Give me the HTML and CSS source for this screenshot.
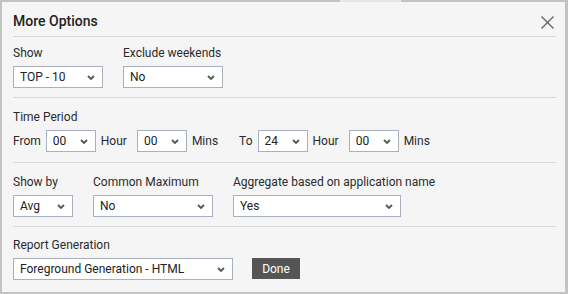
FILE: index.html
```html
<!DOCTYPE html>
<html>
<head>
<meta charset="utf-8">
<link rel="stylesheet" href="styles.css">
</head>
<body>
<div class="backdrop-tab"></div>
<div class="dialog">
  <div class="header">
    <h1 class="title">More Options</h1>
    <button class="close" aria-label="Close">
      <svg width="13" height="13" viewBox="0 0 13 13"><path d="M0.5 0.5 L12.5 12.5 M12.5 0.5 L0.5 12.5" stroke="#666" stroke-width="1.4" fill="none"/></svg>
    </button>
  </div>

  <div class="section s1">
    <div class="fields">
      <div class="field">
        <div class="label">Show</div>
        <div class="select w90"><span>TOP - 10</span><svg class="chev" width="8" height="5" viewBox="0 0 8 5"><path d="M1 1 L4 4 L7 1" stroke="#555" stroke-width="1.8" fill="none"/></svg></div>
      </div>
      <div class="field">
        <div class="label">Exclude weekends</div>
        <div class="select w100"><span>No</span><svg class="chev" width="8" height="5" viewBox="0 0 8 5"><path d="M1 1 L4 4 L7 1" stroke="#555" stroke-width="1.8" fill="none"/></svg></div>
      </div>
    </div>
  </div>

  <div class="section s2">
    <div class="label">Time Period</div>
    <div class="time-row">
      <div class="group">
        <span class="txt">From</span>
        <div class="select w50"><span>00</span><svg class="chev" width="8" height="5" viewBox="0 0 8 5"><path d="M1 1 L4 4 L7 1" stroke="#555" stroke-width="1.8" fill="none"/></svg></div>
        <span class="txt">Hour</span>
      </div>
      <div class="group">
        <div class="select w50"><span>00</span><svg class="chev" width="8" height="5" viewBox="0 0 8 5"><path d="M1 1 L4 4 L7 1" stroke="#555" stroke-width="1.8" fill="none"/></svg></div>
        <span class="txt">Mins</span>
      </div>
      <div class="group to">
        <span class="txt">To</span>
        <div class="select w50"><span>24</span><svg class="chev" width="8" height="5" viewBox="0 0 8 5"><path d="M1 1 L4 4 L7 1" stroke="#555" stroke-width="1.8" fill="none"/></svg></div>
        <span class="txt">Hour</span>
      </div>
      <div class="group">
        <div class="select w50"><span>00</span><svg class="chev" width="8" height="5" viewBox="0 0 8 5"><path d="M1 1 L4 4 L7 1" stroke="#555" stroke-width="1.8" fill="none"/></svg></div>
        <span class="txt">Mins</span>
      </div>
    </div>
  </div>

  <div class="section s3">
    <div class="fields">
      <div class="field">
        <div class="label">Show by</div>
        <div class="select w60"><span>Avg</span><svg class="chev" width="8" height="5" viewBox="0 0 8 5"><path d="M1 1 L4 4 L7 1" stroke="#555" stroke-width="1.8" fill="none"/></svg></div>
      </div>
      <div class="field">
        <div class="label">Common Maximum</div>
        <div class="select w120"><span>No</span><svg class="chev" width="8" height="5" viewBox="0 0 8 5"><path d="M1 1 L4 4 L7 1" stroke="#555" stroke-width="1.8" fill="none"/></svg></div>
      </div>
      <div class="field">
        <div class="label">Aggregate based on application name</div>
        <div class="select w168"><span>Yes</span><svg class="chev" width="8" height="5" viewBox="0 0 8 5"><path d="M1 1 L4 4 L7 1" stroke="#555" stroke-width="1.8" fill="none"/></svg></div>
      </div>
    </div>
  </div>

  <div class="section s4">
    <div class="label">Report Generation</div>
    <div class="report-row">
      <div class="select w220"><span>Foreground Generation - HTML</span><svg class="chev" width="8" height="5" viewBox="0 0 8 5"><path d="M1 1 L4 4 L7 1" stroke="#555" stroke-width="1.8" fill="none"/></svg></div>
      <button class="done">Done</button>
    </div>
  </div>
</div>
</body>
</html>
```

FILE: styles.css
```css
* { box-sizing: border-box; }

html, body {
  margin: 0;
  padding: 0;
}

body {
  background: #c3c3c3;
  width: 568px;
  height: 294px;
  overflow: hidden;
  position: relative;
  font-family: Roboto, "Liberation Sans", sans-serif;
  font-size: 12px;
  color: #2b2b2b;
}

.backdrop-tab {
  position: absolute;
  left: 340px;
  top: 0;
  width: 61px;
  height: 2px;
  background: #e6e6e6;
}

.dialog {
  margin: 2px 3px 0 2px;
  height: 290px;
  background: #f5f5f5;
  padding: 0 9px 0 11px;
}

.header {
  display: flex;
  justify-content: space-between;
  align-items: center;
  padding: 9px 0 4px;
  border-bottom: 1px solid #d9d9d9;
}

.title {
  margin: 0;
  font-size: 14px;
  font-weight: 500;
  line-height: 21px;
  color: #222;
}

.close {
  border: 0;
  background: none;
  padding: 0;
  margin: 1px 2px 0 0;
  width: 13px;
  height: 13px;
  display: block;
}
.close svg { display: block; }

.section {
  border-bottom: 1px solid #d9d9d9;
}
.s1 { padding: 8px 0 9px; }
.s2 { padding: 11px 0 10px; }
.s3 { padding: 11px 0 9px; }
.s4 { padding: 10px 0 0; border-bottom: 0; }

.label {
  line-height: 16px;
  margin-bottom: 5px;
  color: #2b2b2b;
}

.fields {
  display: flex;
  gap: 20px;
}

.field {
  display: flex;
  flex-direction: column;
}

.select {
  height: 22px;
  border: 1px solid #a9b1c1;
  background: #fff;
  display: flex;
  align-items: center;
  justify-content: space-between;
  padding: 0 7px 0 6px;
  color: #222;
  line-height: 20px;
}
.select span { white-space: nowrap; }
.chev { display: block; flex: none; }

.w50 { width: 50px; }
.w60 { width: 60px; }
.w90 { width: 90px; }
.w100 { width: 100px; }
.w120 { width: 120px; }
.w168 { width: 168px; }
.w220 { width: 220px; }

.time-row {
  display: flex;
  align-items: center;
  gap: 10px;
}
.group {
  display: flex;
  align-items: center;
  gap: 5px;
}
.group.to { margin-left: 11px; }
.txt { line-height: 21px; }

.report-row {
  display: flex;
  align-items: flex-start;
  gap: 19px;
}

.done {
  height: 21px;
  width: 48px;
  border: 0;
  background: #555555;
  color: #fff;
  font-family: Roboto, "Liberation Sans", sans-serif;
  font-size: 12px;
  padding: 0;
}
```
